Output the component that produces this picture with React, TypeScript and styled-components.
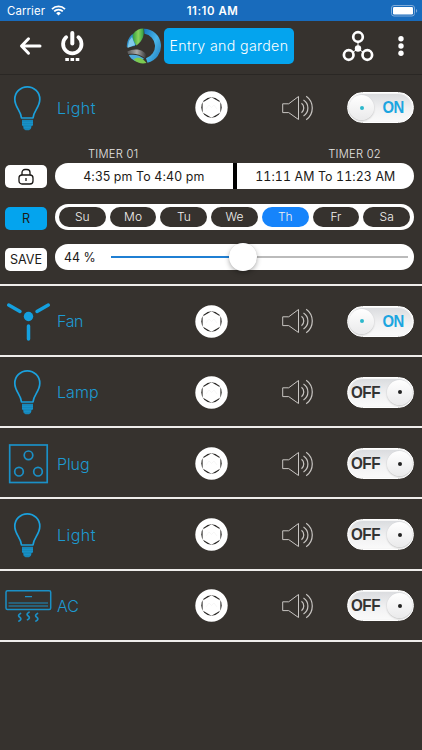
import { useState } from "react";
import styled, { createGlobalStyle } from "styled-components";

const GlobalStyle = createGlobalStyle`
  body {
    margin: 0;
    background: #36322e;
    font-family: Inter, "Liberation Sans", sans-serif;
  }
  * {
    box-sizing: border-box;
  }
`

const Screen = styled.div`
  width: 422px;
  height: 750px;
  overflow: hidden;
  background: #36322e;
`

const StatusBar = styled.div`
  display: grid;
  grid-template-columns: 1fr auto 1fr;
  align-items: center;
  height: 21px;
  padding: 0 4px 0 7px;
  background: #186bbc;
  color: white;
  font-size: 11.4px;
  letter-spacing: 0.1px;
`

const Carrier = styled.div`
  display: flex;
  align-items: center;
  gap: 6px;
`

const Clock = styled.div`
  font-weight: 600;
  font-size: 11.4px;
  letter-spacing: 0.55px;
`

const BatterySlot = styled.div`
  display: flex;
  justify-content: flex-end;
`

const Header = styled.header`
  display: flex;
  align-items: center;
  height: 54px;
  padding: 0 16px 4px 19px;
  border-bottom: 1px solid #2a2724;
`

const IconButton = styled.button<{ $gap?: number }>`
  display: flex;
  padding: 0;
  margin-left: ${p => p.$gap || 0}px;
  border: none;
  background: none;
`

const RoomTitle = styled.div`
  display: flex;
  align-items: center;
  justify-content: center;
  width: 130px;
  height: 36px;
  margin-left: 2px;
  border-radius: 5px;
  background: #04a4ee;
  color: white;
  font-size: 14.2px;
  font-weight: 300;
  letter-spacing: 0.35px;
  white-space: nowrap;
`

const Device = styled.section`
  border-bottom: 2px solid #efedeb;
`

const DeviceRow = styled.div<{ $tall?: boolean }>`
  display: flex;
  align-items: center;
  height: ${p => p.$tall ? 65 : 69.15}px;
  padding: ${p => p.$tall ? 0 : 1.4}px 8px 0 0;
`

const DeviceIcon = styled.div`
  display: flex;
  width: 57px;
  flex: none;
`

const DeviceName = styled.div<{ $spacing: number }>`
  width: 138px;
  color: #1d9ad2;
  font-size: 16px;
  font-weight: 300;
  letter-spacing: ${p => p.$spacing}px;
`

const Speaker = styled.div`
  display: flex;
  margin-left: 54px;
`

const Toggle = styled.button<{ $on: boolean }>`
  display: flex;
  flex-direction: ${p => p.$on ? "row" : "row-reverse"};
  align-items: center;
  justify-content: space-between;
  width: 67px;
  height: 31px;
  margin-left: auto;
  padding: ${p => p.$on ? "0 9px 0 1px" : "0 1px 0 3px"};
  border: 1px solid #fff;
  border-radius: 16px;
  background: linear-gradient(#d9dbde, #f1f1f2 55%, #fafafa);
  box-shadow: inset 0 0 0 1px #f6f6f6;
  color: ${p => p.$on ? "#1ca5e0" : "#333"};
  font: bold 16.5px "Liberation Sans", sans-serif;
  letter-spacing: -0.5px;
`

const ToggleText = styled.span<{ $on: boolean }>`
  display: block;
  transform: scaleX(${p => p.$on ? 0.9 : 0.92});
  transform-origin: ${p => p.$on ? "right" : "left"};
`

const Knob = styled.span<{ $on: boolean }>`
  display: flex;
  align-items: center;
  justify-content: center;
  width: 25px;
  height: 25px;
  border-radius: 50%;
  background: linear-gradient(#fff, #eaeaeb);
  box-shadow: 0 1px 2px rgba(0, 0, 0, 0.22);

  &::after {
    content: "";
    width: 4px;
    height: 4px;
    border-radius: 50%;
    background: ${p => p.$on ? "#2cb8cb" : "#222"};
  }
`

const SettingsPanel = styled.div`
  display: flex;
  flex-direction: column;
  height: 144px;
  padding-left: 5px;
`

const TimerNames = styled.div`
  display: flex;
  flex: none;
  justify-content: space-between;
  align-items: center;
  width: 359px;
  height: 23px;
  margin-left: 50px;
  padding: 5px 33px 0 33px;
  color: #e8e6e4;
  font-size: 11.2px;
  font-weight: 300;
  letter-spacing: 0.25px;
`

const SettingLine = styled.div`
  display: grid;
  flex: none;
  grid-template-columns: 42px 359px;
  column-gap: 8px;
  height: 26px;
  margin-bottom: 14.6px;
  align-items: start;

  &:last-child {
    margin-bottom: 0;
  }
`

const SmallButton = styled.button<{ $top: number, $active?: boolean }>`
  display: flex;
  align-items: center;
  justify-content: center;
  height: 23px;
  margin-top: ${p => p.$top}px;
  padding: 0;
  border: none;
  border-radius: 5px;
  background: ${p => p.$active ? "#04a4ee" : "white"};
  color: #1c1a18;
  font: 400 12.6px Inter, sans-serif;
`

const Bar = styled.div`
  display: flex;
  align-items: center;
  height: 26px;
  border-radius: 13px;
  background: white;
  color: #1c1a18;
  font-size: 12.4px;
`

const TimerRange = styled.div<{ $tabular?: boolean }>`
  flex: 1;
  text-align: center;
  font-variant-numeric: ${p => p.$tabular ? "tabular-nums" : "normal"};
  letter-spacing: 0.1px;
  white-space: nowrap;
`

const Divider = styled.div`
  width: 4px;
  height: 26px;
  background: black;
`

const Days = styled(Bar)`
  gap: 4px;
  padding: 0 4px;
`

const Day = styled.div<{ $active: boolean }>`
  flex: 1;
  height: 20px;
  border-radius: 10px;
  background: ${p => p.$active ? "#1684fb" : "#36322e"};
  color: #f3f1ef;
  font-size: 12px;
  font-weight: 300;
  line-height: 20px;
  text-align: center;
`

const Percent = styled.div`
  width: 56px;
  padding-left: 9px;
  white-space: nowrap;
`

const Track = styled.div`
  position: relative;
  width: 297px;
  height: 2px;
  background: #bbb;
`

const Fill = styled.div`
  height: 2px;
  background: #1f7fd3;
`

const Thumb = styled.div`
  position: absolute;
  top: -13px;
  width: 28px;
  height: 28px;
  margin-left: -14px;
  border-radius: 50%;
  background: white;
  box-shadow: 0 2px 5px rgba(0, 0, 0, 0.3), 0 0 1px rgba(0, 0, 0, 0.15);
`

const WifiIcon = () => (
  <svg width="15" height="11" viewBox="0 0 15 11" fill="none" stroke="white" strokeWidth="1.8">
    <path d="M1 4.1a9.3 9.3 0 0 1 13 0M3.2 6.4a6.1 6.1 0 0 1 8.6 0" />
    <path d="M7.5 10.5 5.2 8.2a3.3 3.3 0 0 1 4.6 0z" fill="white" stroke="none" />
  </svg>
)

const BatteryIcon = () => (
  <svg width="27" height="12" viewBox="0 0 27 12">
    <rect x=".5" y=".5" width="23" height="10.5" rx="2.5" fill="none" stroke="#7fabd9" />
    <rect x="2" y="2" width="20" height="7.5" rx="1.2" fill="white" />
    <path d="M25 4v3.8c1.6-.6 1.6-3.2 0-3.8z" fill="#7fabd9" />
  </svg>
)

const BackIcon = () => (
  <svg width="23" height="20" viewBox="0 0 23 20" fill="none" stroke="white" strokeWidth="3" strokeLinecap="round" strokeLinejoin="round">
    <path d="M21 10H3M9.5 2.8 2.5 10l7 7.2" />
  </svg>
)

const PowerIcon = () => (
  <svg width="24" height="32" viewBox="0 0 24 32" fill="none" stroke="white">
    <path d="M12.3 3v10.500" strokeWidth="4" strokeLinecap="round" />
    <path d="M6.200 7.200a9.200 9.200 0 1 0 12.200 0" strokeWidth="3.800" strokeLinecap="round" />
    <path d="M5.300 29.500h3.600M10.500 29.500h3.600M15.700 29.500h3.600" strokeWidth="3" />
  </svg>
)

const Logo = () => (
  <svg width="36" height="36" viewBox="0 0 36 36">
    <defs>
      <linearGradient id="ring" x1="0" x2="1" y1="0" y2="1">
        <stop offset="0" stopColor="#1476bd" />
        <stop offset=".5" stopColor="#49b5e9" />
        <stop offset="1" stopColor="#1b79bc" />
      </linearGradient>
      <linearGradient id="leaf" x1="0" x2="1">
        <stop offset="0" stopColor="#319b42" />
        <stop offset=".5" stopColor="#8ad35a" />
        <stop offset="1" stopColor="#2e9b46" />
      </linearGradient>
      <linearGradient id="steel" x1="0" x2="1">
        <stop offset="0" stopColor="#555" />
        <stop offset=".5" stopColor="#aaa" />
        <stop offset="1" stopColor="#333" />
      </linearGradient>
    </defs>
    <path d="M18 .8a17.200 17.200 0 0 1 3.500 34l-1.500-4.600a12.600 12.600 0 0 0-1.500-24.500z" fill="url(#ring)" />
    <path d="M6.500 6C3 9 .8 13.500 .8 19l8 -1 1.500-2.500z" fill="#2f91cc" />
    <path d="M3 13 6 9l3 8-7.500 3z" fill="#83cbea" />
    <path d="M7 6C10 2 14 .4 17.500 .5c.6 6 .5 11-7 17C8 14 6 10 7 6z" fill="url(#leaf)" />
    <path d="M1.300 23.500C8 20 17 21 20.500 27l-1.500 3C14 26 8 25 2.200 26z" fill="url(#steel)" />
    <path d="M2.800 27c6-1 11 0 15.500 4l-9 2.200C6 31.500 4 29.500 2.800 27z" fill="#4dabdd" />
    <path d="M7.500 31.500c4-3 9-2 13 3.500-4.500 1-9 .2-13-3.500z" fill="#7cca52" />
  </svg>
)

const GroupIcon = () => (
  <svg width="32" height="32" viewBox="0 0 32 32" fill="none" stroke="white" strokeWidth="2.700">
    <circle cx="16" cy="7" r="4.800" />
    <circle cx="6.700" cy="25" r="4.800" />
    <circle cx="25.300" cy="25" r="4.800" />
    <circle cx="16" cy="18.500" r="3.200" fill="white" stroke="none" />
    <path d="M16 12v7l-5 3M16 19l5 3" strokeWidth="1" />
  </svg>
)

const MoreIcon = () => (
  <svg width="6" height="22" viewBox="0 0 6 22" fill="white">
    <circle cx="3" cy="3.700" r="2.700" />
    <circle cx="3" cy="11" r="2.700" />
    <circle cx="3" cy="18.300" r="2.700" />
  </svg>
)

const BulbIcon = () => (
  <svg width="57" height="48" viewBox="0 0 57 48" fill="none" stroke="#1ba0dc" strokeWidth="1.700">
    <path d="M21.500 34C21 26.500 14.800 23.500 14.800 15.300a12.500 12.500 0 0 1 25 0c0 8.200-6.300 11.200-6.800 18.700z" strokeLinejoin="round" />
    <path d="M22 35.700h11v5.600l-2 1.500v2l-2 1.500h-3.500l-2-1.500v-2L22 41.300z" fill="#1787b9" stroke="none" />
    <path d="M22 38.300h11M22 40.700h11M23.500 43.300h8" stroke="#1ba0dc" strokeWidth=".5" />
  </svg>
)

const FanIcon = () => (
  <svg width="57" height="48" viewBox="0 0 57 48" stroke="#14a0df" strokeWidth="3.500" strokeLinecap="round">
    <circle cx="28.500" cy="19.500" r="4.700" fill="#14a0df" stroke="none" />
    <path d="M8.700 8 20 14.500M48.300 8 37 14.500M28.500 29v13" />
  </svg>
)

const PlugIcon = () => (
  <svg width="57" height="48" viewBox="0 0 57 48" fill="none" stroke="#1b90c6" strokeWidth="1.700">
    <rect x="9.700" y="5" width="37.500" height="37.500" />
    <circle cx="28.500" cy="15.300" r="4.300" />
    <circle cx="19" cy="31.700" r="4.300" />
    <circle cx="38" cy="31.700" r="4.300" />
  </svg>
)

const AcIcon = () => (
  <svg width="57" height="48" viewBox="0 0 57 48" fill="none" stroke="#1b90c6" strokeWidth="1.500">
    <rect x="6" y="8.800" width="44.700" height="18.800" rx="1.500" />
    <path d="M25 14.600h7M8.500 21h39.500M8.500 24h39.500" strokeWidth="1.100" />
    <path d="M20.500 31.500c-3 1.500-2 3-.5 4s1 2.500-1 3.500M29 30.200c-3 1.500-2 3-.5 4s1 2.500-1 3.500M37.500 31.500c-3 1.500-2 3-.5 4s1 2.500-1 3.500" strokeWidth="1.700" strokeLinecap="round" />
  </svg>
)

const DimmerIcon = () => (
  <svg width="33" height="33" viewBox="0 0 33 33" fill="none">
    <circle cx="16.500" cy="16.500" r="16.200" fill="white" />
    <circle cx="16.500" cy="16.500" r="10.200" fill="#292725" />
    <path d="m16.500 6.200 8.900 5.200v10.200l-8.900 5.200-8.900-5.200V11.400z" fill="white" />
    <path d="m11 18 3-4 2.500 2.500L19 14l3 4" stroke="#eee" strokeWidth=".5" />
  </svg>
)

const SpeakerIcon = () => (
  <svg width="33" height="26" viewBox="0 0 33 26" fill="none" stroke="#c8c5c2">
    <path d="M.700 8.800h6L16.500 1.500v23L6.700 17.600h-6z" />
    <path d="M19.500 8.300a6 6 0 0 1 0 9.400M21.500 5a9.500 9.500 0 0 1 0 16M24.200 1.200a14.500 14.500 0 0 1 0 23.600" strokeWidth="1.200" />
  </svg>
)

const LockIcon = () => (
  <svg width="16" height="17" viewBox="0 0 16 17" fill="none" stroke="#191715" strokeWidth="1.300">
    <rect x="1" y="7" width="14" height="9" rx="3" />
    <path d="M4 7V4.500a3 3 0 0 1 3-3h2a3 3 0 0 1 3 3V7M8 10v3" />
  </svg>
)

const days = ["Su", "Mo", "Tu", "We", "Th", "Fr", "Sa"]

const initialDevices = [
  { name: "Light", icon: <BulbIcon />, on: true, spacing: 0.45 },
  { name: "Fan", icon: <FanIcon />, on: true, spacing: -0.4 },
  { name: "Lamp", icon: <BulbIcon />, on: false, spacing: 0.05 },
  { name: "Plug", icon: <PlugIcon />, on: false, spacing: -0.1 },
  { name: "Light", icon: <BulbIcon />, on: false, spacing: 0.45 },
  { name: "AC", icon: <AcIcon />, on: false, spacing: 0 }
]

export default () => {
  const [ devices, setDevices ] = useState(initialDevices)
  const [ level ] = useState(44)

  const toggle = (index: number) => {
    setDevices(devices.map((d, i) => i === index ? { ...d, on: !d.on } : d))
  }

  return <Screen>
    <GlobalStyle />
    <StatusBar>
      <Carrier>Carrier <WifiIcon /></Carrier>
      <Clock>11:10 AM</Clock>
      <BatterySlot><BatteryIcon /></BatterySlot>
    </StatusBar>
    <Header>
      <IconButton><BackIcon /></IconButton>
      <IconButton $gap={18}><PowerIcon /></IconButton>
      <IconButton $gap={42}><Logo /></IconButton>
      <RoomTitle>Entry and garden</RoomTitle>
      <IconButton $gap={48}><GroupIcon /></IconButton>
      <IconButton $gap={24}><MoreIcon /></IconButton>
    </Header>
    {devices.map((device, i) => (
      <Device key={i}>
        <DeviceRow $tall={i === 0}>
          <DeviceIcon>{device.icon}</DeviceIcon>
          <DeviceName $spacing={device.spacing}>{device.name}</DeviceName>
          <DimmerIcon />
          <Speaker><SpeakerIcon /></Speaker>
          <Toggle $on={device.on} onClick={() => toggle(i)}>
            <Knob $on={device.on} />
            <ToggleText $on={device.on}>{device.on ? "ON" : "OFF"}</ToggleText>
          </Toggle>
        </DeviceRow>
        {i === 0 && (
          <SettingsPanel>
            <TimerNames>
              <span>TIMER 01</span>
              <span>TIMER 02</span>
            </TimerNames>
            <SettingLine>
              <SmallButton $top={2}><LockIcon /></SmallButton>
              <Bar>
                <TimerRange>4:35 pm To 4:40 pm</TimerRange>
                <Divider />
                <TimerRange $tabular>11:11 AM To 11:23 AM</TimerRange>
              </Bar>
            </SettingLine>
            <SettingLine>
              <SmallButton $top={3} $active>R</SmallButton>
              <Days>
                {days.map(day => <Day key={day} $active={day === "Th"}>{day}</Day>)}
              </Days>
            </SettingLine>
            <SettingLine>
              <SmallButton $top={4}>SAVE</SmallButton>
              <Bar>
                <Percent>{level} %</Percent>
                <Track>
                  <Fill style={{ width: `${level}%` }} />
                  <Thumb style={{ left: `${level + 0.6}%` }} />
                </Track>
              </Bar>
            </SettingLine>
          </SettingsPanel>
        )}
      </Device>
    ))}
  </Screen>
}
